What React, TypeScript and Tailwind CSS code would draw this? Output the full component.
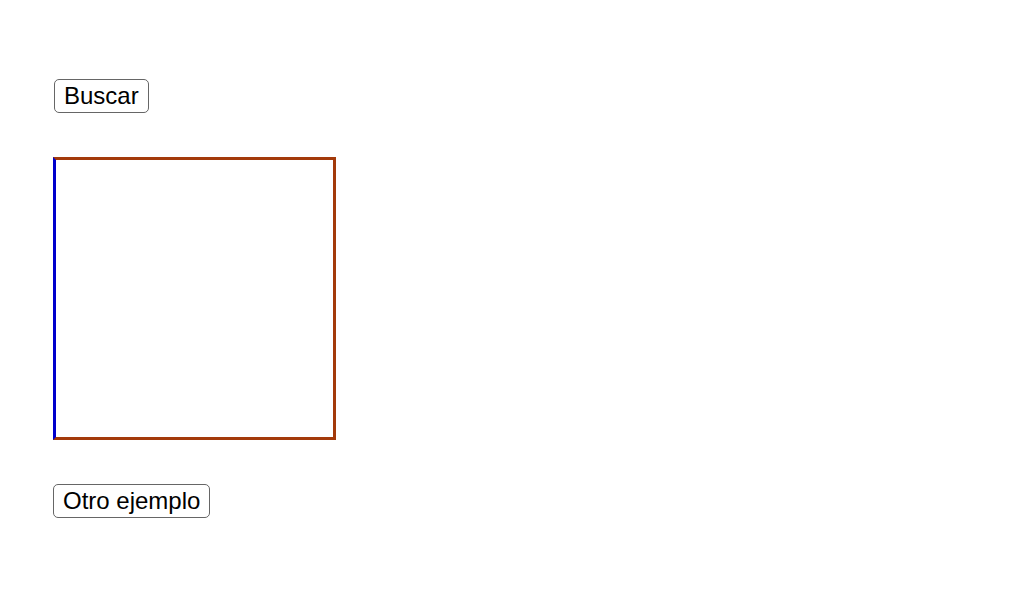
import React from 'react'

function PlainButton({ label, className = '' }: { label: string; className?: string }) {
  return (
    <button
      type="button"
      className={`h-[34px] px-[9px] border border-[#666666] rounded-[5px] bg-white text-black text-[24px] leading-none font-['Liberation_Sans',Arial,sans-serif] ${className}`}
    >
      {label}
    </button>
  )
}

export default function App() {
  return (
    <div className="min-h-[607px] w-full bg-white pt-[79px] pl-[53px] font-['Liberation_Sans',Arial,sans-serif]">
      <div className="flex flex-col items-start">
        <PlainButton label="Buscar" className="ml-[1px]" />

        {/* Drawing area */}
        <div className="mt-[44px] w-[283px] h-[283px] border-[3px] border-[#a33a0a] border-l-[#0000cc]" />

        <PlainButton label="Otro ejemplo" className="mt-[44px]" />
      </div>
    </div>
  )
}
